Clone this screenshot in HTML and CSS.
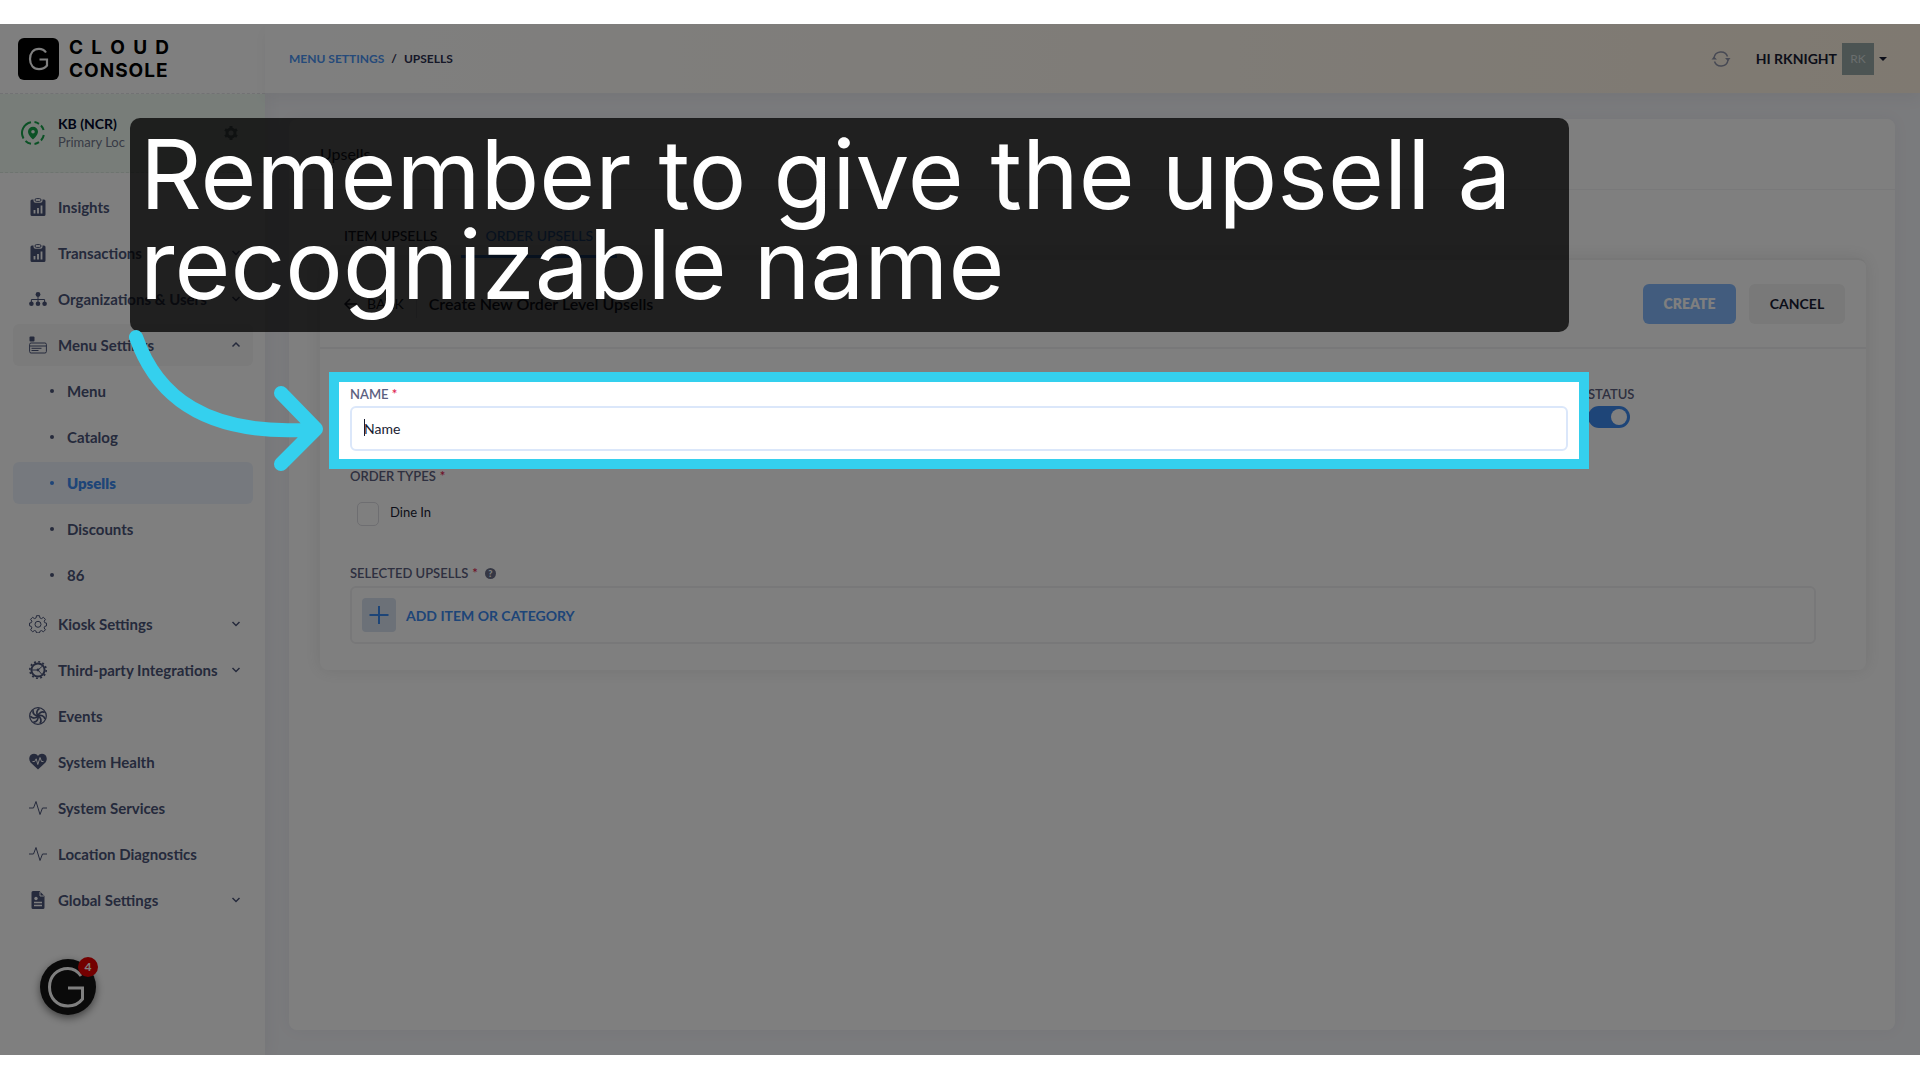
FILE: index.html
```html
<!DOCTYPE html>
<html lang="en">
<head>
    <meta charset="UTF-8">
    <meta name="viewport" content="width=device-width, initial-scale=1.0">
    <title>Cloud Console - Upsells</title>
    <link rel="stylesheet" href="styles.css">
</head>
<body>
    <div class="stage">
        <!-- Sidebar -->
        <aside class="sidebar">
            <div class="logo">
                <svg width="41" height="42" viewBox="0 0 41 42">
                    <rect width="41" height="42" rx="6" fill="#000"/>
                    <path d="M28 14.5C26.300 12 24 10.800 21 10.800C15.500 10.800 12 15 12 21C12 27 15.500 31.200 21 31.200C24.500 31.200 27 30 29 27.500V21.500H21.500" fill="none" stroke="#fff" stroke-width="2.200"/>
                </svg>
                <div class="logo-text">
                    <span class="logo-cloud">C L O U D</span>
                    <span class="logo-console">CONSOLE</span>
                </div>
            </div>

            <div class="location">
                <svg width="24" height="24" viewBox="0 0 24 24">
                    <path d="M10 1.200A11 11 0 0 0 2.500 17.500M4.500 20A11 11 0 0 0 10 22.800" fill="none" stroke="#16a34a" stroke-width="2"/>
                    <path d="M13.500 1.100A11 11 0 0 1 18 2.800M20 4.500A11 11 0 0 1 22.600 9M22.800 14A11 11 0 0 1 20 19.500M18 21.200A11 11 0 0 1 13.500 22.900" fill="none" stroke="#16a34a" stroke-width="2"/>
                    <path d="M12 5.800a5 5 0 0 0-5 5c0 3.500 5 7.700 5 7.700s5-4.200 5-7.700a5 5 0 0 0-5-5zm0 3.200a1.800 1.800 0 1 1 0 3.600 1.800 1.800 0 0 1 0-3.600z" fill="#16a34a"/>
                </svg>
                <div class="location-text">
                    <strong>KB (NCR)</strong>
                    <span>Primary Loc</span>
                </div>
                <svg class="gear" width="16" height="16" viewBox="0 0 16 16">
                    <path d="M8 1v14M2 4.500l12 7M2 11.500l12-7" stroke="#7d8a8a" stroke-width="3"/>
                    <circle cx="8" cy="8" r="4" fill="#eaf5ee" stroke="#7d8a8a" stroke-width="3"/>
                </svg>
            </div>

            <nav class="nav">
                <a class="nav-item" href="#">
                    <svg class="icon" viewBox="0 0 18 18"><path d="M3 1.500h1.500v1.200a2 2 0 0 0 2 2h5a2 2 0 0 0 2-2V1.500H15a1.500 1.500 0 0 1 1.500 1.500v13.500A1.500 1.500 0 0 1 15 18H3a1.500 1.500 0 0 1-1.500-1.500V3A1.500 1.500 0 0 1 3 1.500z" fill="currentColor"/><rect x="6" y=".6" width="6" height="2.800" rx="1.400" fill="none" stroke="currentColor"/><path d="M5.500 15.500V12M9 15.500V10M12.500 15.500V7.500" stroke="#fff" stroke-width="1.800"/></svg>
                    <span>Insights</span>
                    <svg class="chevron" viewBox="0 0 10 10"><path d="M1.500 3l3.500 3.500L8.500 3"/></svg>
                </a>
                <a class="nav-item" href="#">
                    <svg class="icon" viewBox="0 0 18 18"><path d="M3 1.500h1.500v1.200a2 2 0 0 0 2 2h5a2 2 0 0 0 2-2V1.500H15a1.500 1.500 0 0 1 1.500 1.500v13.500A1.500 1.500 0 0 1 15 18H3a1.500 1.500 0 0 1-1.500-1.500V3A1.500 1.500 0 0 1 3 1.500z" fill="currentColor"/><rect x="6" y=".6" width="6" height="2.800" rx="1.400" fill="none" stroke="currentColor"/><path d="M5.500 15.500V12M9 15.500V10M12.500 15.500V7.500" stroke="#fff" stroke-width="1.800"/></svg>
                    <span>Transactions</span>
                    <svg class="chevron" viewBox="0 0 10 10"><path d="M1.500 3l3.500 3.500L8.500 3"/></svg>
                </a>
                <a class="nav-item" href="#">
                    <svg class="icon" viewBox="0 0 18 18"><g fill="currentColor"><circle cx="9" cy="4.500" r="2.400"/><circle cx="2.400" cy="13.800" r="2.300"/><circle cx="9" cy="13.800" r="2.300"/><circle cx="15.600" cy="13.800" r="2.300"/></g><path d="M9 5v8M2.400 13V9.500h13.200V13" fill="none" stroke="currentColor"/></svg>
                    <span>Organizations &amp; Users</span>
                    <svg class="chevron" viewBox="0 0 10 10"><path d="M1.500 3l3.500 3.500L8.500 3"/></svg>
                </a>
                <a class="nav-item open" href="#">
                    <svg class="icon" viewBox="0 0 18 18"><rect x=".5" y=".5" width="5" height="5" rx="1" fill="currentColor"/><rect x=".6" y="7" width="16.800" height="10" rx="1.500" fill="none" stroke="currentColor"/><path d="M1 10h16M2.500 12.300h10M2.500 14.500h7" stroke="currentColor"/></svg>
                    <span>Menu Settings</span>
                    <svg class="chevron" viewBox="0 0 10 10"><path d="M1.500 6.500L5 3l3.500 3.500"/></svg>
                </a>
                <div class="submenu">
                    <a class="sub-item" href="#">Menu</a>
                    <a class="sub-item" href="#">Catalog</a>
                    <a class="sub-item active" href="#">Upsells</a>
                    <a class="sub-item" href="#">Discounts</a>
                    <a class="sub-item" href="#">86</a>
                </div>
                <a class="nav-item" href="#">
                    <svg class="icon" viewBox="0 0 18 18"><path d="M7.500.7h3l.4 2.200 1.600.7 1.900-1.300 2 2-1.200 1.900.6 1.600 1.700.3v2.800l-1.700.4-.7 1.600 1.300 1.900-2 2-1.900-1.200-1.600.7-.4 1.600h-3l-.4-1.700-1.500-.7-2 1.300-2-2 1.300-1.900-.7-1.600-1.700-.4V8.100l1.700-.3.7-1.600-1.300-1.900 2-2 1.900 1.300 1.600-.7z" fill="none" stroke="currentColor" stroke-linejoin="round"/><circle cx="9" cy="9.300" r="3" fill="none" stroke="currentColor"/></svg>
                    <span>Kiosk Settings</span>
                    <svg class="chevron" viewBox="0 0 10 10"><path d="M1.500 3l3.500 3.500L8.500 3"/></svg>
                </a>
                <a class="nav-item" href="#">
                    <svg class="icon" viewBox="0 0 18 18"><circle cx="9" cy="9" r="6.600" fill="none" stroke="currentColor" stroke-width="2"/><circle cx="9" cy="9" r="8.200" fill="none" stroke="currentColor" stroke-width="1.600" stroke-dasharray="2 2.290"/><path d="M9 9H3M9 9l4.500-4M9 9l4 4.500" stroke="currentColor"/><circle cx="9" cy="9" r="1.400" fill="currentColor"/></svg>
                    <span>Third-party Integrations</span>
                    <svg class="chevron" viewBox="0 0 10 10"><path d="M1.500 3l3.500 3.500L8.500 3"/></svg>
                </a>
                <a class="nav-item" href="#">
                    <svg class="icon" viewBox="0 0 18 18"><circle cx="9" cy="9" r="8.300" fill="none" stroke="currentColor" stroke-width="1.300"/><g fill="none" stroke="currentColor" stroke-width="1.700"><path d="M9 9C7 6.500 7.500 3 10.500 1.500"/><path d="M9 9C7 6.500 7.500 3 10.500 1.500" transform="rotate(51 9 9)"/><path d="M9 9C7 6.500 7.500 3 10.500 1.500" transform="rotate(103 9 9)"/><path d="M9 9C7 6.500 7.500 3 10.500 1.500" transform="rotate(154 9 9)"/><path d="M9 9C7 6.500 7.500 3 10.500 1.500" transform="rotate(206 9 9)"/><path d="M9 9C7 6.500 7.500 3 10.500 1.500" transform="rotate(257 9 9)"/><path d="M9 9C7 6.500 7.500 3 10.500 1.500" transform="rotate(309 9 9)"/></g></svg>
                    <span>Events</span>
                </a>
                <a class="nav-item" href="#">
                    <svg class="icon" viewBox="0 0 18 18"><path d="M9 16.500L1.500 9.500C-.5 7 0 3.500 2 1.800 4.300 0 7.500.5 9 3c1.500-2.500 4.700-3 7-1.200 2 1.700 2.500 5.200.5 7.700z" fill="currentColor"/><path d="M3.500 8.500h2.200l1.500-2.700 1.600 5.700L11 4.500l1.500 4h2" fill="none" stroke="#fff"/></svg>
                    <span>System Health</span>
                </a>
                <a class="nav-item" href="#">
                    <svg class="icon" viewBox="0 0 18 18"><path d="M0 9h4.500L7 2.500l4 13L13.500 9H18" fill="none" stroke="currentColor"/></svg>
                    <span>System Services</span>
                </a>
                <a class="nav-item" href="#">
                    <svg class="icon" viewBox="0 0 18 18"><path d="M0 9h4.500L7 2.500l4 13L13.500 9H18" fill="none" stroke="currentColor"/></svg>
                    <span>Location Diagnostics</span>
                </a>
                <a class="nav-item" href="#">
                    <svg class="icon" viewBox="0 0 18 18"><path d="M4 0h6.500l5 5v11.500A1.500 1.500 0 0 1 14 18H4a1.500 1.500 0 0 1-1.500-1.500v-15A1.500 1.500 0 0 1 4 0z" fill="currentColor"/><path d="M11 1v4h4" fill="none" stroke="#fff"/><circle cx="7" cy="7.500" r="1.700" fill="#fff"/><path d="M5 11.500h8M5 14.500h8" stroke="#fff" stroke-width="1.300"/></svg>
                    <span>Global Settings</span>
                    <svg class="chevron" viewBox="0 0 10 10"><path d="M1.500 3l3.500 3.500L8.500 3"/></svg>
                </a>
            </nav>

            <button class="chat" aria-label="Open chat">
                <svg width="56" height="56" viewBox="0 0 56 56"><path d="M41 17C37.500 12 33 9.500 28 9.500C17 9.500 9.500 17.500 9.500 28C9.500 39 17 47 28 47C34 47 39 44.500 42.500 40V29H28" fill="none" stroke="#fff" stroke-width="3"/></svg>
                <span class="chat-badge">4</span>
            </button>
        </aside>

        <!-- Main area -->
        <div class="main">
            <header class="topbar">
                <div class="breadcrumb">
                    <a href="#">MENU SETTINGS</a>
                    <span>/</span>
                    <span>UPSELLS</span>
                </div>
                <div class="user">
                    <svg class="refresh" width="20" height="18" viewBox="0 0 20 18"><path d="M3 8A7 7 0 0 1 16.500 6.500M17 10A7 7 0 0 1 3.500 11.500" fill="none" stroke="#8e93a8" stroke-width="1.500"/><path d="M.5 9.500L3 6.500l3 3zM14 8l3 3.200L19.500 8z" fill="#8e93a8"/></svg>
                    <span class="user-name">HI RKNIGHT</span>
                    <span class="avatar">RK</span>
                    <span class="caret-down"></span>
                </div>
            </header>

            <main class="panel">
                <h1>Upsells</h1>
                <div class="panel-body">
                    <div class="tabs">
                        <a class="tab" href="#">ITEM UPSELLS</a>
                        <a class="tab selected" href="#">ORDER UPSELLS</a>
                    </div>

                    <section class="card">
                        <div class="card-header">
                            <a class="back" href="#">
                                <svg width="14" height="12" viewBox="0 0 14 12"><path d="M6 1L1 6l5 5M1 6h12" fill="none" stroke="#181c32" stroke-width="1.500"/></svg>
                                BACK
                            </a>
                            <h2>Create New Order Level Upsells</h2>
                            <button class="btn primary">CREATE</button>
                            <button class="btn">CANCEL</button>
                        </div>

                        <form class="card-body">
                            <div class="form-row">
                                <div class="field name-field">
                                    <label for="name">NAME <i>*</i></label>
                                    <input type="text" id="name" placeholder="Name">
                                    <div class="highlight"></div>
                                </div>
                                <div class="field">
                                    <label for="status">STATUS</label>
                                    <input type="checkbox" id="status" class="toggle" checked>
                                </div>
                            </div>

                            <div class="field order-types">
                                <span class="label">ORDER TYPES <i>*</i></span>
                                <div class="check">
                                    <input type="checkbox" id="dineIn">
                                    <label for="dineIn">Dine In</label>
                                </div>
                            </div>

                            <div class="field">
                                <span class="label">SELECTED UPSELLS <i>*</i> <b class="help">?</b></span>
                                <div class="add-box">
                                    <button type="button" class="add">
                                        <svg width="34" height="34" viewBox="0 0 34 34"><rect width="34" height="34" rx="4" fill="#d9e2f0"/><path d="M17 8v18M7.500 17h19" stroke="#3a8bf0" stroke-width="2"/></svg>
                                        ADD ITEM OR CATEGORY
                                    </button>
                                </div>
                            </div>
                        </form>
                    </section>
                </div>
            </main>
        </div>

        <!-- Tutorial callout -->
        <div class="callout">Remember to give the upsell a<br>recognizable name</div>
        <svg class="arrow" width="200" height="150" viewBox="0 0 200 150">
            <path d="M11 13C31 71 80 114 191 105M156 69L191 105L156 140" fill="none" stroke="#34d0ee" stroke-width="14" stroke-linecap="round" stroke-linejoin="round"/>
        </svg>
    </div>
</body>
</html>
```

FILE: styles.css
```css
* {
    box-sizing: border-box;
}
body {
    margin: 0;
    padding: 24px 0 25px;
    min-height: 100vh;
    display: flex;
    background: #fff;
    font-family: Lato, sans-serif;
    font-size: 15px;
    color: #181c32;
}
a {
    color: inherit;
    text-decoration: none;
}
button {
    font-family: inherit;
    cursor: pointer;
}
.stage {
    flex: 1;
    display: flex;
    position: relative;
    overflow: hidden;
    background: #f5f6fa;
}

/* Sidebar */
.sidebar {
    width: 265px;
    flex-shrink: 0;
    display: flex;
    flex-direction: column;
    background: #fff;
    box-shadow: 0 0 16px rgba(60, 60, 90, 0.08);
}
.logo {
    height: 70px;
    padding: 0 18px;
    display: flex;
    align-items: center;
    gap: 10px;
    border-bottom: 1px dashed #e4e4e8;
}
.logo-text {
    width: 100px;
    display: flex;
    flex-direction: column;
    font-family: Inter, sans-serif;
    font-size: 19px;
    font-weight: 700;
    line-height: 23px;
    color: #000;
}
.logo-cloud {
    text-align-last: justify;
}
.logo-console {
    letter-spacing: 1px;
}
.location {
    height: 79px;
    padding: 0 26px 0 21px;
    display: flex;
    align-items: center;
    gap: 13px;
    background: #f0fbf3;
    border-bottom: 1px dashed #dde8e0;
}
.location-text {
    flex: 1;
    display: flex;
    flex-direction: column;
    font-size: 14px;
    line-height: 19px;
}
.location-text strong {
    color: #00082a;
}
.location-text span {
    font-size: 13px;
    color: #70768c;
}
.nav {
    padding: 13px 12px 0 13px;
}
.nav-item,
.sub-item {
    height: 42px;
    margin-bottom: 4px;
    display: flex;
    align-items: center;
    border-radius: 6px;
    font-weight: 700;
    color: #4b5478;
}
.nav-item {
    padding: 0 12px 0 16px;
    gap: 11px;
}
.nav-item span {
    flex: 1;
    white-space: nowrap;
}
.nav-item.open {
    background: #f7f7f7;
}
.icon {
    width: 18px;
    height: 18px;
}
.chevron {
    width: 10px;
    height: 10px;
    fill: none;
    stroke: #4b5478;
    stroke-width: 1.500;
}
.submenu {
    padding-bottom: 3px;
}
.sub-item {
    padding-left: 37px;
    gap: 13px;
}
.sub-item::before {
    content: "";
    width: 4px;
    height: 4px;
    border-radius: 50%;
    background: currentColor;
}
.sub-item.active {
    background: #ecf3fc;
    color: #3c8af0;
    font-weight: 800;
}
.chat {
    position: absolute;
    left: 40px;
    bottom: 40px;
    width: 56px;
    height: 56px;
    padding: 0;
    border: none;
    border-radius: 50%;
    background: #141414;
    box-shadow: 0 3px 8px rgba(0, 0, 0, 0.5);
}
.chat-badge {
    position: absolute;
    top: -2px;
    right: -2px;
    width: 20px;
    height: 20px;
    border-radius: 50%;
    background: #e60000;
    color: #fff;
    font-size: 12px;
    font-weight: 700;
    line-height: 20px;
}

/* Top bar */
.main {
    flex: 1;
    min-width: 0;
    display: flex;
    flex-direction: column;
}
.topbar {
    height: 69px;
    padding: 0 33px 0 24px;
    display: flex;
    align-items: center;
    justify-content: space-between;
    background: linear-gradient(to right, #fff, #fff3e2);
    box-shadow: 0 6px 14px rgba(60, 60, 90, 0.06);
}
.breadcrumb {
    display: flex;
    gap: 7px;
    font-size: 12px;
    font-weight: 700;
    color: #2c3050;
}
.breadcrumb a {
    color: #4a94f4;
}
.user {
    display: flex;
    align-items: center;
    gap: 5px;
}
.refresh {
    margin-right: 20px;
}
.user-name {
    font-size: 14px;
    font-weight: 700;
}
.avatar {
    width: 32px;
    height: 32px;
    background: #98a8a6;
    color: #d5dcdc;
    font-size: 12px;
    line-height: 32px;
    text-align: center;
}
.caret-down {
    border: 4px solid transparent;
    border-top-color: #181c32;
    border-bottom: none;
}

/* Panel */
.panel {
    flex: 1;
    margin: 26px 25px 25px 24px;
    background: #fff;
    border-radius: 8px;
    box-shadow: 0 0 16px rgba(60, 60, 90, 0.05);
}
h1 {
    margin: 0;
    height: 71px;
    padding: 0 31px;
    font-size: 16px;
    font-weight: 400;
    line-height: 70px;
    border-bottom: 1px solid #f2f2f4;
}
.panel-body {
    padding: 20px 29px 0 31px;
}
.tabs {
    display: flex;
    font-size: 14px;
    font-weight: 500;
}
.tab {
    height: 48px;
    padding: 0 24px;
    line-height: 52px;
    border-bottom: 3px solid transparent;
}
.tab.selected {
    color: #3c8af0;
    border-bottom-color: #3c8af0;
}
.card {
    border-radius: 8px;
    border-top: 2px solid #eee;
    box-shadow: 0 0 18px rgba(60, 60, 60, 0.12);
}
.card-header {
    height: 89px;
    padding: 0 21px 0 24px;
    display: flex;
    align-items: center;
    border-bottom: 2px solid #f0f0f2;
}
.back {
    padding-right: 12px;
    display: flex;
    align-items: center;
    gap: 9px;
    font-size: 14px;
    line-height: 28px;
    border-right: 1px solid #e4e4e8;
}
h2 {
    margin: 0;
    flex: 1;
    padding-left: 12px;
    font-size: 16px;
    font-weight: 600;
}
.btn {
    width: 96px;
    height: 40px;
    padding: 0;
    border: none;
    border-radius: 6px;
    background: #f2f2f2;
    color: #181c32;
    font-size: 14px;
    font-weight: 700;
}
.btn.primary {
    width: 93px;
    margin-right: 13px;
    background: #84b9fc;
    color: #fff;
    font-weight: 800;
}
.card-body {
    padding: 35px 50px 26px 30px;
}
.form-row {
    display: grid;
    grid-template-columns: 1fr 228px;
    gap: 20px;
}
.field {
    display: flex;
    flex-direction: column;
    align-items: flex-start;
}
.field > label,
.label {
    line-height: 20px;
    font-size: 13px;
    font-weight: 600;
    color: #5c6080;
}
.field i {
    color: #e0244f;
    font-style: normal;
}
.name-field {
    position: relative;
}
.name-field input {
    width: 100%;
    height: 45px;
    margin-top: 2px;
    padding: 0 12px;
    border: 2px solid #dbe7fa;
    border-radius: 6px;
    font-family: inherit;
    font-size: 14px;
}
.name-field input::placeholder {
    color: #181c32;
}
/* text cursor */
.name-field::after {
    content: "";
    position: absolute;
    left: 14px;
    top: 35px;
    width: 1px;
    height: 17px;
    background: #181c32;
}
/* everything outside the highlighted field is dimmed */
.highlight {
    position: absolute;
    inset: -12px -21px -18px;
    border: 10px solid #34d0ee;
    box-shadow: 0 0 0 2000px rgba(0, 0, 0, 0.5);
    pointer-events: none;
    z-index: 5;
}
.toggle {
    appearance: none;
    width: 42px;
    height: 22px;
    margin: 2px 0 0;
    padding: 3px;
    display: flex;
    justify-content: flex-end;
    border-radius: 11px;
    background: #3c8af0;
}
.toggle::before {
    content: "";
    width: 16px;
    height: 16px;
    border-radius: 50%;
    background: #fff;
}
.order-types {
    margin: 15px 0 37px;
}
.check {
    padding: 16px 0 0 7px;
    display: flex;
    gap: 11px;
    font-size: 13px;
    line-height: 20px;
}
.check input {
    appearance: none;
    width: 22px;
    height: 24px;
    margin: 0;
    border: 1px solid #dcdce2;
    border-radius: 5px;
}
.label {
    display: flex;
    align-items: center;
    gap: 4px;
}
.help {
    width: 11px;
    height: 11px;
    margin-left: 3px;
    border-radius: 50%;
    background: #6a6f88;
    color: #fff;
    font-size: 9px;
    line-height: 11px;
    text-align: center;
}
.add-box {
    width: 100%;
    margin-top: 3px;
    padding: 10px;
    border: 2px solid #f0f0f2;
    border-radius: 6px;
}
.add {
    padding: 0;
    display: flex;
    align-items: center;
    gap: 10px;
    border: none;
    background: none;
    color: #3c8af0;
    font-size: 14px;
    font-weight: 700;
}

/* Callout */
.callout {
    position: absolute;
    left: 130px;
    top: 94px;
    width: 1439px;
    height: 214px;
    padding: 11px 10px;
    border-radius: 10px;
    background: rgba(0, 0, 0, 0.75);
    color: #fff;
    font-family: Inter, sans-serif;
    font-size: 96px;
    line-height: 90px;
    z-index: 6;
}
.arrow {
    position: absolute;
    left: 125px;
    top: 300px;
    z-index: 7;
}
```
